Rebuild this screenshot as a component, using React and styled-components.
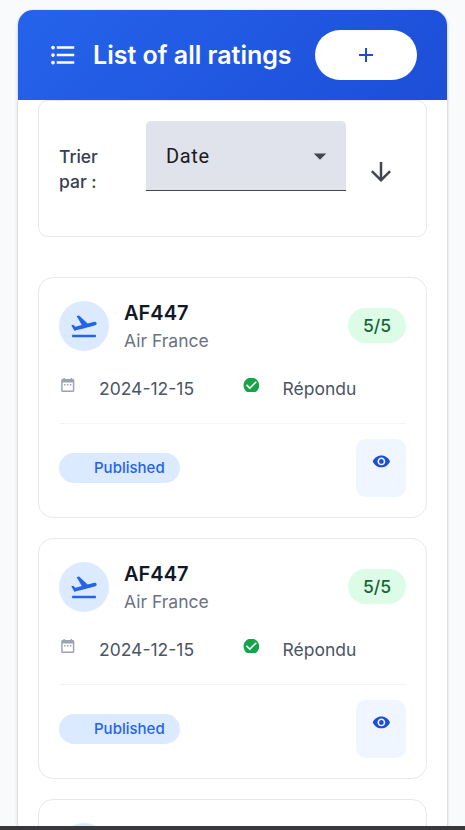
import React from "react";
import styled, { createGlobalStyle } from "styled-components";
import {
  MdAdd,
  MdArrowDownward,
  MdArrowDropDown,
  MdCheckCircle,
  MdDateRange,
  MdFlightTakeoff,
  MdFormatListBulleted,
  MdVisibility,
} from "react-icons/md";

const GlobalStyle = createGlobalStyle`
  *, *::before, *::after { box-sizing: border-box; }
  body {
    margin: 0;
    overflow: hidden;
    background: #f9fafb;
    font-family: Inter, "Liberation Sans", sans-serif;
  }
  svg { display: block; flex: none; }
`;

const Page = styled.div`
  height: 830px;
  display: flex;
  flex-direction: column;
  overflow: hidden;
`;

const Viewport = styled.main`
  flex: 1;
  min-height: 0;
  overflow: hidden;
  padding: 10px 18px 0;
`;

const BottomBar = styled.div`
  flex: none;
  height: 4px;
  background: #38373a;
`;

const Panel = styled.section`
  width: 429px;
  height: 1100px;
  border-radius: 15px;
  background: #fff;
  box-shadow: 0 1px 3px rgba(0, 0, 0, 0.3);
`;

const Header = styled.header`
  height: 90px;
  padding: 0 30px;
  display: flex;
  align-items: center;
  border-radius: 15px 15px 0 0;
  background: linear-gradient(135deg, #2563eb, #1d4ed8);
  color: #fff;
`;

const Title = styled.h1`
  margin: 0 0 0 15px;
  font-size: 25px;
  line-height: 35px;
  font-weight: 600;
  white-space: nowrap;
`;

const AddButton = styled.button`
  width: 102px;
  height: 50px;
  margin-left: auto;
  padding: 0 0 1px;
  display: flex;
  align-items: center;
  justify-content: center;
  border: 0;
  border-radius: 25px;
  background: #fff;
  color: #1d4ed8;
`;

const Content = styled.div`
  padding: 0 20px;
`;

const SortCard = styled.div`
  height: 137px;
  padding: 20px;
  display: flex;
  border: 1px solid #e5e7eb;
  border-radius: 10px;
`;

const SortLabel = styled.label`
  width: 87px;
  padding: 23px 40px 0 0;
  color: #374151;
  font-size: 17.5px;
  line-height: 25px;
  font-weight: 500;
`;

const Select = styled.div`
  width: 200px;
  height: 70px;
  padding: 0 11px 0 20px;
  display: flex;
  align-items: center;
  justify-content: space-between;
  border-bottom: 1px solid #44464f;
  border-radius: 5px 5px 0 0;
  background: #e0e2ec;
  color: #1a1b1f;
  font: 400 20px/30px Roboto, sans-serif;
  letter-spacing: 0.625px;

  svg { color: #44464f; }
`;

const OrderButton = styled.button`
  width: 30px;
  height: 30px;
  margin: 36px 0 0 20px;
  padding: 0;
  border: 0;
  background: none;
  color: #44464f;
`;

const Ratings = styled.div`
  margin-top: 40px;
  display: flex;
  flex-direction: column;
  gap: 20px;
`;

const Card = styled.article`
  height: 241px;
  padding: 20px;
  border: 1px solid #e5e7eb;
  border-radius: 15px;
`;

const CardTop = styled.div`
  height: 56px;
  display: flex;
  align-items: center;
`;

const Avatar = styled.div`
  width: 50px;
  height: 50px;
  display: grid;
  place-items: center;
  border-radius: 50%;
  background: #dbeafe;
  color: #2563eb;
`;

const Flight = styled.div`
  margin-left: 15px;
`;

const FlightNumber = styled.h2`
  margin: 0;
  color: #111827;
  font-size: 20px;
  line-height: 30px;
  font-weight: 600;
`;

const Airline = styled.p`
  margin: 0;
  color: #6b7280;
  font-size: 17.5px;
  line-height: 26px;
`;

const Score = styled.span`
  height: 35px;
  margin: 0 0 1px auto;
  padding: 0 15px;
  border-radius: 18px;
  background: #dcfce7;
  color: #166534;
  font-size: 17.5px;
  line-height: 35px;
  font-weight: 500;
`;

const Details = styled.div`
  height: 70px;
  padding-top: 22px;
  display: grid;
  grid-template-columns: 183.5px 1fr;
  align-items: start;
  border-bottom: 1px solid #f3f4f6;
`;

const Detail = styled.div`
  display: flex;
  color: #4b5563;
  font-size: 17.5px;
  line-height: 25px;
`;

const DetailIcon = styled.span`
  width: 17.5px;
  height: 14px;
  margin: 2px 22.5px 0 0;
  display: flex;
  align-items: center;
  justify-content: center;
  overflow: hidden;
  color: ${({ $color }) => $color};
`;

const CardBottom = styled.div`
  padding-top: 15px;
  display: flex;
  align-items: center;
  justify-content: space-between;
`;

const Status = styled.span`
  width: 121px;
  height: 30px;
  padding-left: 35px;
  border-radius: 15px;
  background: #dbeafe;
  color: #2563eb;
  font-size: 15px;
  line-height: 30px;
  font-weight: 500;
`;

const ViewButton = styled.button`
  width: 50px;
  height: 58px;
  padding: 13px 0 0;
  display: flex;
  justify-content: center;
  border: 0;
  border-radius: 10px;
  background: #eff6ff;
  color: #1d4ed8;
`;

const ratings = [1, 2, 3].map((id) => ({
  id,
  flight: "AF447",
  airline: "Air France",
  date: "2024-12-15",
  score: "5/5",
}));

function RatingCard({ rating }) {
  return (
    <Card>
      <CardTop>
        <Avatar><MdFlightTakeoff size={30} /></Avatar>
        <Flight>
          <FlightNumber>{rating.flight}</FlightNumber>
          <Airline>{rating.airline}</Airline>
        </Flight>
        <Score>{rating.score}</Score>
      </CardTop>
      <Details>
        <Detail>
          <DetailIcon $color="#9ca3af"><MdDateRange size={17.5} /></DetailIcon>
          {rating.date}
        </Detail>
        <Detail>
          <DetailIcon $color="#16a34a"><MdCheckCircle size={18.75} /></DetailIcon>
          Répondu
        </Detail>
      </Details>
      <CardBottom>
        <Status>Published</Status>
        <ViewButton aria-label="View rating"><MdVisibility size={18.75} /></ViewButton>
      </CardBottom>
    </Card>
  );
}

export default function App() {
  return (
    <Page>
      <GlobalStyle />
      <Viewport>
        <Panel>
          <Header>
            <MdFormatListBulleted size={30} />
            <Title>List of all ratings</Title>
            <AddButton aria-label="Add rating"><MdAdd size={24} /></AddButton>
          </Header>
          <Content>
            <SortCard>
              <SortLabel>Trier par :</SortLabel>
              <Select>Date<MdArrowDropDown size={30} /></Select>
              <OrderButton aria-label="Change order"><MdArrowDownward size={30} /></OrderButton>
            </SortCard>
            <Ratings>
              {ratings.map((rating) => <RatingCard key={rating.id} rating={rating} />)}
            </Ratings>
          </Content>
        </Panel>
      </Viewport>
      <BottomBar />
    </Page>
  );
}
